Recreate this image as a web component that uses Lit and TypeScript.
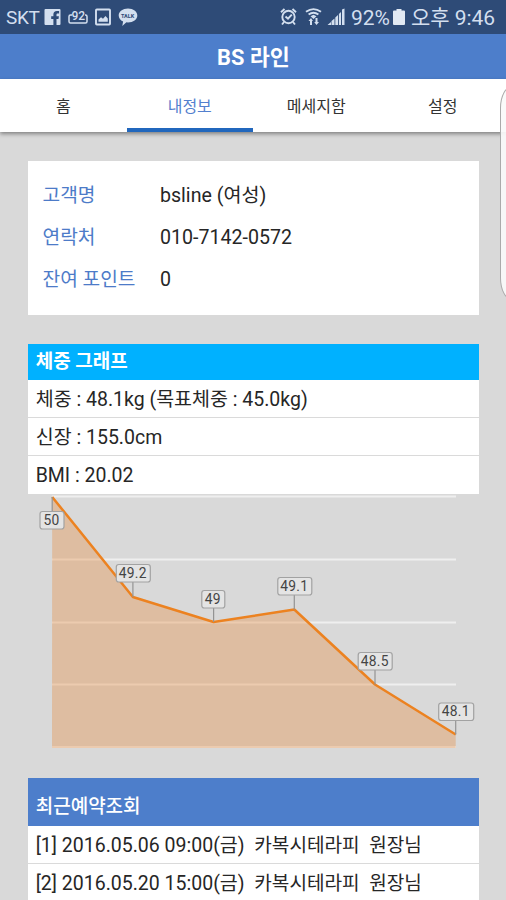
import { LitElement, html, svg, css } from "lit";
import { customElement, property } from "lit/decorators.js";
import { classMap } from "lit/directives/class-map.js";

@customElement("status-bar")
class StatusBar extends LitElement {
  static styles = css`
    :host {
      display: flex;
      justify-content: space-between;
      height: 34px;
      box-sizing: border-box;
      padding: 0 11px 0 6px;
      background: #2e4b77;
      color: #d3dfef;
      line-height: 36px;
      white-space: nowrap;
    }
    .side { display: flex; align-items: flex-start; height: 34px; }
    .carrier { font-size: 19px; letter-spacing: -0.3px; width: 38px; }
    .percent { font-size: 21px; letter-spacing: 0; margin-left: 6px; }
    .clock { font-size: 21px; letter-spacing: -0.05px; margin-left: 6px; }
    svg { display: block; flex: none; }
    .facebook, .badge, .picture { margin-right: 7px; }
    .alarm { margin-right: 8px; }
    .wifi { margin-right: 5px; }
    .battery { margin-left: 3px; }
    .tiny { font: 700 5.5px Roboto, sans-serif; fill: #2e4b77; }
    .number { font: 500 12px Roboto, sans-serif; fill: #d3dfef; }
  `;
  render() {
    return html`
      <div class="side">
        <span class="carrier">SKT</span>
        <svg class="facebook" width="17" height="34" viewBox="0 0 17 34">
          <path fill="#d3dfef" d="M1.500 9h14q1 0 1 1v14q0 1-1 1h-3v-6h2l.4-2.700h-2.400v-1.600c0-.9.4-1.300 1.300-1.300h1.300v-2.500h-2.200c-2.300 0-3.500 1.300-3.500 3.400v2H7.200V19h2.200v6H1.500q-1 0-1-1V10q0-1 1-1z" />
        </svg>
        <svg class="badge" width="20" height="34" viewBox="0 0 20 34">
          <path fill="none" stroke="#d3dfef" stroke-width="1.500" d="M4 15H2.500a1.500 1.500 0 0 0-1.500 1.500v5A1.500 1.500 0 0 0 2.500 23h15a1.500 1.500 0 0 0 1.500-1.500v-5a1.500 1.500 0 0 0-1.500-1.500H17" />
          <text class="number" x="3.500" y="20">92</text>
        </svg>
        <svg class="picture" width="16" height="34" viewBox="0 0 16 34">
          <rect x="1" y="9.500" width="14" height="15" rx="0.800" fill="none" stroke="#d3dfef" stroke-width="1.900" />
          <path fill="#d3dfef" d="M3.500 21.800v-2.300l2.500-2.200 2 1.500 2.500-2.800 2.300 2.500v3.300z" />
        </svg>
        <svg width="20" height="34" viewBox="0 0 20 34">
          <path fill="#d3dfef" d="M10 8.500c5.200 0 9.300 3 9.300 6.900s-4.100 7-9.300 7l-1.600-.1L4.300 26l.8-4.600C2.400 20.200.7 18 .7 15.400.7 11.500 4.800 8.500 10 8.500z" />
          <text class="tiny" x="3" y="17.500">TALK</text>
        </svg>
      </div>
      <div class="side">
        <svg class="alarm" width="17" height="34" viewBox="0 0 17 34" fill="none" stroke="#d3dfef" stroke-width="1.900">
          <circle cx="8.500" cy="17" r="6.200" />
          <path d="M1 12.300 4.500 9M16 12.300 12.500 9M4 22l-2 2.500M13 22l2 2.500M5.500 16.500l2.500 2.200 3.800-4" />
        </svg>
        <svg class="wifi" width="17" height="34" viewBox="0 0 17 34" fill="none" stroke="#d3dfef" stroke-width="1.900">
          <path d="M1 11.800q7.500-5.400 15 0M3.600 14.600q4.900-3.700 9.800 0" />
          <path fill="#d3dfef" stroke="none" d="M8.500 14.800 11.500 16.300 8.500 19 5.500 16.300zM6 18l2 3H7v4H5v-4H3.500zM11.500 25l2.500-3h-1.500v-4h-2v4H9.200z" />
        </svg>
        <svg width="18" height="34" viewBox="0 0 18 34" fill="#d3dfef">
          <path d="M.5 25 4 22v3zM4.500 21 7.500 18.500V25h-3zM8.300 17.500 11 15v10H8.300zM11.900 14 14 12v13h-2.100zM15 9.500 17.500 8.500V25H15z" />
        </svg>
        <span class="percent">92%</span>
        <svg class="battery" width="12" height="34" viewBox="0 0 12 34" fill="#e1e9f3">
          <path d="M3.500 9h5v1.500H11q1 0 1 1V24q0 1-1 1H1q-1 0-1-1V11.500q0-1 1-1h2.500z" />
        </svg>
        <span class="clock">오후 9:46</span>
      </div>
    `;
  }
}

@customElement("tab-strip")
class TabStrip extends LitElement {
  @property({ type: Array }) tabs: string[] = [];
  @property({ type: Number }) selected = 0;
  static styles = css`
    :host {
      display: grid;
      grid-template-columns: repeat(4, 1fr);
      grid-template-rows: 53px;
      height: 53px;
      background: #fff;
      box-shadow: 0 2px 4px rgba(0, 0, 0, 0.4);
    }
    .tab {
      box-sizing: border-box;
      height: 53px;
      text-align: center;
      font-size: 16px;
      line-height: 55px;
      color: #333;
      border-bottom: 4px solid transparent;
    }
    .active { color: #5380ce; border-bottom-color: #2167bd; }
  `;
  render() {
    return this.tabs.map(
      (t, i) => html`<div class=${classMap({ tab: true, active: i === this.selected })}>${t}</div>`
    );
  }
}

interface Point { value: number; text: string; tx: number; ty: number; w: number; }

@customElement("weight-chart")
class WeightChart extends LitElement {
  static styles = css`
    :host { display: block; height: 284px; }
    svg { display: block; overflow: visible; }
    .grid { stroke: #efefef; stroke-width: 2.200; }
    .area { fill: #e98634; fill-opacity: 0.34; }
    .line { fill: none; stroke: #ec8220; stroke-width: 2.500; stroke-linejoin: round; }
    .stem { stroke: #939393; stroke-width: 1.200; }
    .box { fill: #e4e4e4; stroke: #a2a2a2; stroke-width: 1.200; }
    .value { font: 13.800px Roboto, sans-serif; letter-spacing: 0.3px; fill: #444; text-anchor: middle; }
  `;
  private points: Point[] = [
    { value: 50, text: "50", tx: 52, ty: 520, w: 24 },
    { value: 49.2, text: "49.2", tx: 133.3, ty: 573, w: 34 },
    { value: 49, text: "49", tx: 213.3, ty: 599, w: 23 },
    { value: 49.1, text: "49.1", tx: 294.8, ty: 586, w: 34 },
    { value: 48.5, text: "48.5", tx: 375.2, ty: 661, w: 34 },
    { value: 48.1, text: "48.1", tx: 456.2, ty: 711.5, w: 35 },
  ];
  render() {
    const x = (i: number) => 52.2 + i * 80.7;
    const y = (v: number) => 497 + (50 - v) * 125;
    const line = this.points.map((p, i) => `${x(i)},${y(p.value)}`).join(" ");
    return html`
      <svg width="450" height="284" viewBox="28 494 450 284">
        ${[496.5, 559.5, 622.5, 684.5, 747].map(
          (g) => svg`<line class="grid" x1="52" x2="456" y1=${g} y2=${g} />`
        )}
        <polygon class="area" points="52,748 ${line} 455.700,748" />
        <polyline class="line" points=${line} />
        ${this.points.map(
          (p, i) => svg`
            <line class="stem" x1=${x(i)} x2=${x(i)} y1=${y(p.value)} y2=${p.ty} />
            <rect class="box" x=${p.tx - p.w / 2} y=${p.ty - 8.5} width=${p.w} height="17.500" rx="2.500" />
            <text class="value" x=${p.tx - 0.5} y=${p.ty + 4.7}>${p.text}</text>`
        )}
      </svg>
    `;
  }
}

@customElement("app-root")
class AppRoot extends LitElement {
  static styles = css`
    :host {
      display: flex;
      flex-direction: column;
      position: relative;
      height: 900px;
      overflow: hidden;
      background: #d9d9d9;
      color: #262626;
      font-family: Roboto, "Noto Sans CJK KR", sans-serif;
    }
    status-bar, .title, tab-strip { flex: none; }
    .title {
      height: 45px;
      line-height: 48px;
      text-align: center;
      background: #4d7ecb;
      color: #fff;
      font-size: 21.800px;
      font-weight: 700;
      padding-left: 1px;
    }
    .content { padding: 28.500px 27px 0 28.200px; }
    .profile {
      box-sizing: border-box;
      height: 154.500px;
      margin-bottom: 29px;
      padding: 13px 14.300px;
      background: #fff;
      display: grid;
      grid-template-columns: 117.500px 1fr;
      grid-auto-rows: 42.200px;
      line-height: 44px;
      font-size: 19.600px;
    }
    .key { color: #4d7bc8; font-size: 19.200px; }
    .heading {
      box-sizing: border-box;
      padding-left: 7.500px;
      color: #fff;
      font-size: 19px;
    }
    .sky { height: 36px; line-height: 36px; background: #00b1ff; font-weight: 700; }
    .blue { height: 48px; line-height: 57px; background: #4d7ecb; font-weight: 500; }
    .row {
      box-sizing: border-box;
      height: 38px;
      padding-left: 7.500px;
      line-height: 39px;
      font-size: 19.500px;
      background: #fff;
      border-bottom: 1.500px solid #dadada;
      white-space: pre;
    }
    .last { border-bottom-color: #fff; }
    .service { font-size: 19.100px; }
    .edge {
      position: absolute;
      box-sizing: border-box;
      top: 86px;
      left: 500px;
      width: 24px;
      height: 214px;
      border: 1.500px solid #aaa;
      border-radius: 12px / 22px;
      background: rgba(250, 250, 250, 0.92);
    }
  `;
  render() {
    return html`
      <status-bar></status-bar>
      <div class="title">BS 라인</div>
      <tab-strip .tabs=${["홈", "내정보", "메세지함", "설정"]} .selected=${1}></tab-strip>
      <div class="content">
        <div class="profile">
          <span class="key">고객명</span><span>bsline (여성)</span>
          <span class="key">연락처</span><span>010-7142-0572</span>
          <span class="key">잔여 포인트</span><span>0</span>
        </div>
        <div class="heading sky">체중 그래프</div>
        <div class="row">체중 : 48.1kg (목표체중 : 45.0kg)</div>
        <div class="row">신장 : 155.0cm</div>
        <div class="row last">BMI : 20.02</div>
        <weight-chart></weight-chart>
        <div class="heading blue">최근예약조회</div>
        <div class="row">[1] 2016.05.06 09:00(금)  <span class="service">카복시테라피  원장님</span></div>
        <div class="row">[2] 2016.05.20 15:00(금)  <span class="service">카복시테라피  원장님</span></div>
      </div>
      <div class="edge"></div>
    `;
  }
}
